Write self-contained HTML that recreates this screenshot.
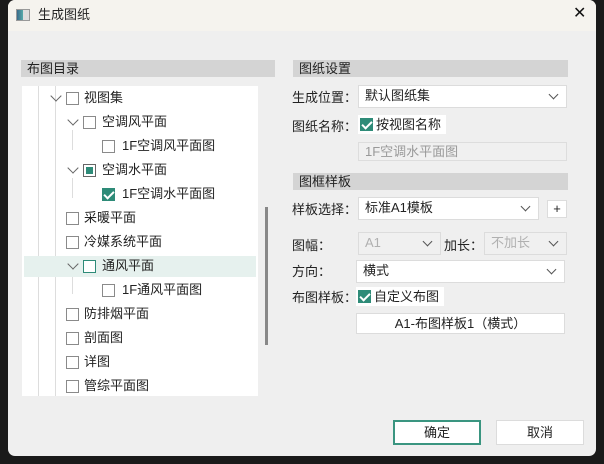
<!DOCTYPE html>
<html><head><meta charset="utf-8"><style>
*{box-sizing:border-box;margin:0;padding:0}
body{width:604px;height:464px;background:#1a1a1a;position:relative;overflow:hidden;font-family:"Liberation Sans","Noto Sans CJK SC",sans-serif;font-size:13px;color:#222}
.dlg{position:absolute;left:8px;top:0;width:588px;height:456px;background:#efefef;border-radius:7px;overflow:hidden}
.title{position:absolute;left:0;top:0;width:588px;height:31px;background:#f5f3ee}
.abs{position:absolute}
.hdr{position:absolute;height:17px;background:#d4d4d4;line-height:17px;padding-left:6px;font-size:13px;color:#222}
.cb{position:absolute;width:13px;height:13px;border:1px solid #8a8a8a;background:#fff}
.cb.on{background:#2e8b78;border-color:#2e8b78}
.cb.on:after{content:"";position:absolute;left:3px;top:0px;width:4px;height:8px;border:solid #fff;border-width:0 2px 2px 0;transform:rotate(45deg)}
.cb.part{border-color:#666}
.cb.part:after{content:"";position:absolute;left:2px;top:2px;width:7px;height:7px;background:#2e8b78}
.t{position:absolute;line-height:16px;white-space:nowrap}
.chev{position:absolute;width:8px;height:8px;border:solid #666;border-width:0 1.5px 1.5px 0;transform:rotate(45deg)}
.sel{position:absolute;background:#fff;border:1px solid #dcdcdc;line-height:20px;padding-left:6px;white-space:nowrap}
.sel .c{position:absolute;right:9px;top:5px;width:7px;height:7px;border:solid #555;border-width:0 1.5px 1.5px 0;transform:rotate(45deg)}
.sel.dis{background:#f0f0f0;color:#b0b0b0}
.btn{position:absolute;background:#fff;border:1px solid #dcdcdc;text-align:center}
</style></head><body>
<div class="dlg">
 <div class="title">
  <div class="abs" style="left:8px;top:9px;width:14px;height:12px;border:1px solid #999;background:linear-gradient(90deg,#3a6a8a 0,#5aa 50%,#ddd 50%)"></div>
  <div class="t" style="left:30px;top:7px;font-size:13px">生成图纸</div>
  <div class="t" style="left:565px;top:6px;font-size:16px;color:#111">✕</div>
 </div>
 <div class="hdr" style="left:13px;top:60px;width:254px">布图目录</div>
 <div class="abs" style="left:14px;top:86px;width:236px;height:310px;background:#fff"></div>
 <div class="abs" style="left:30px;top:86px;width:1px;height:310px;background:#ddd"></div>
 <div class="abs" style="left:47px;top:86px;width:1px;height:310px;background:#ddd"></div>
 <div class="abs" style="left:64px;top:130px;width:1px;height:20px;background:#ddd"></div>
 <div class="abs" style="left:64px;top:178px;width:1px;height:20px;background:#ddd"></div>
 <div class="abs" style="left:64px;top:274px;width:1px;height:20px;background:#ddd"></div>
 <div class="abs" style="left:257px;top:207px;width:3px;height:138px;background:#888"></div>
 <div class="abs" style="left:16px;top:256px;width:232px;height:21px;background:#e6f1ee"></div>

 <div class="chev" style="left:44px;top:92px"></div><div class="cb" style="left:58px;top:92px"></div><div class="t" style="left:76px;top:90px">视图集</div>
 <div class="chev" style="left:61px;top:116px"></div><div class="cb" style="left:75px;top:116px"></div><div class="t" style="left:94px;top:114px">空调风平面</div>
 <div class="cb" style="left:94px;top:140px"></div><div class="t" style="left:114px;top:138px">1F空调风平面图</div>
 <div class="chev" style="left:61px;top:164px"></div><div class="cb part" style="left:75px;top:164px"></div><div class="t" style="left:94px;top:162px">空调水平面</div>
 <div class="cb on" style="left:94px;top:188px"></div><div class="t" style="left:114px;top:186px">1F空调水平面图</div>
 <div class="cb" style="left:58px;top:212px"></div><div class="t" style="left:76px;top:210px">采暖平面</div>
 <div class="cb" style="left:58px;top:236px"></div><div class="t" style="left:76px;top:234px">冷媒系统平面</div>
 <div class="chev" style="left:61px;top:260px"></div><div class="cb" style="left:75px;top:260px;border-color:#2e8b78"></div><div class="t" style="left:94px;top:258px">通风平面</div>
 <div class="cb" style="left:94px;top:284px"></div><div class="t" style="left:114px;top:282px">1F通风平面图</div>
 <div class="cb" style="left:58px;top:308px"></div><div class="t" style="left:76px;top:306px">防排烟平面</div>
 <div class="cb" style="left:58px;top:332px"></div><div class="t" style="left:76px;top:330px">剖面图</div>
 <div class="cb" style="left:58px;top:356px"></div><div class="t" style="left:76px;top:354px">详图</div>
 <div class="cb" style="left:58px;top:380px"></div><div class="t" style="left:76px;top:378px">管综平面图</div>

 <div class="hdr" style="left:285px;top:60px;width:275px">图纸设置</div>
 <div class="t" style="left:284px;top:90px">生成位置：</div>
 <div class="sel" style="left:350px;top:85px;width:209px;height:23px">默认图纸集<span class="c"></span></div>
 <div class="t" style="left:284px;top:119px">图纸名称：</div>
 <div class="abs" style="left:350px;top:115px;width:88px;height:19px;background:#fff"></div>
 <div class="cb on" style="left:352px;top:118px"></div><div class="t" style="left:368px;top:117px">按视图名称</div>
 <div class="sel dis" style="left:350px;top:142px;width:209px;height:19px;line-height:17px;border-color:#ddd;color:#999">1F空调水平面图</div>
 <div class="hdr" style="left:285px;top:173px;width:275px">图框样板</div>
 <div class="t" style="left:284px;top:202px">样板选择：</div>
 <div class="sel" style="left:350px;top:197px;width:181px;height:23px">标准A1模板<span class="c"></span></div>
 <div class="btn" style="left:539px;top:200px;width:20px;height:18px;line-height:16px">+</div>
 <div class="t" style="left:284px;top:238px">图幅：</div>
 <div class="sel dis" style="left:350px;top:232px;width:83px;height:23px">A1<span class="c"></span></div>
 <div class="t" style="left:436px;top:238px">加长：</div>
 <div class="sel dis" style="left:476px;top:232px;width:83px;height:23px">不加长<span class="c"></span></div>
 <div class="t" style="left:284px;top:264px">方向：</div>
 <div class="sel" style="left:348px;top:260px;width:209px;height:23px">横式<span class="c"></span></div>
 <div class="t" style="left:284px;top:290px">布图样板：</div>
 <div class="abs" style="left:348px;top:287px;width:88px;height:19px;background:#fff"></div>
 <div class="cb on" style="left:350px;top:290px"></div><div class="t" style="left:366px;top:289px">自定义布图</div>
 <div class="btn" style="left:348px;top:313px;width:209px;height:21px;line-height:19px">A1-布图样板1（横式）</div>

 <div class="btn" style="left:385px;top:420px;width:88px;height:25px;line-height:21px;border:2px solid #3a9580">确定</div>
 <div class="btn" style="left:488px;top:420px;width:88px;height:25px;line-height:23px">取消</div>
</div>
</body></html>
